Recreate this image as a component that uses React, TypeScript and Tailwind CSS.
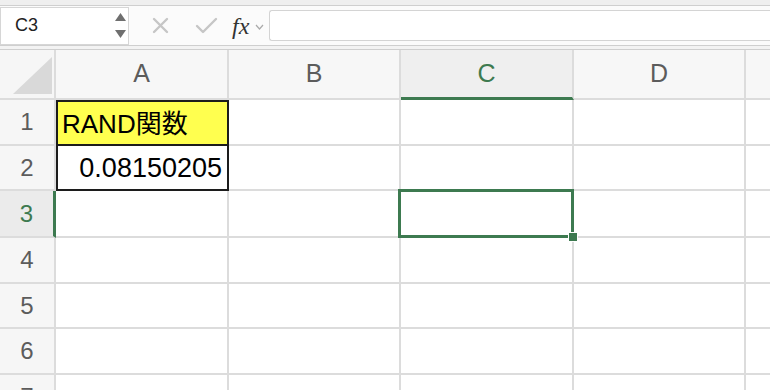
import React from 'react';

const GRID = 'border-[#dcdcdc]';
const colWidths = ['w-[173px]', 'w-[172px]', 'w-[173px]', 'w-[172px]'];
const colNames = ['A', 'B', 'C', 'D'];
const rowHeights = ['h-[46px]', 'h-[45px]', 'h-[47px]', 'h-[46px]', 'h-[45px]', 'h-[46px]', 'h-[46px]'];

const Toolbar = () => (
  <div className="flex h-[40px] items-center border-b border-[#cfcfcf] bg-[#fbfbfb]">
    <div className="flex h-[38px] w-[129px] items-center justify-between border border-[#d6d6d6] bg-white pl-[14px] pr-[2px]">
      <span className="text-[18px] text-[#222]">C3</span>
      <div className="flex flex-col gap-[9px]">
        <svg width="11" height="8" viewBox="0 0 11 8">
          <polygon points="5.5,0 11,8 0,8" fill="#6f6f6f" />
        </svg>
        <svg width="11" height="8" viewBox="0 0 11 8">
          <polygon points="0,0 11,0 5.5,8" fill="#6f6f6f" />
        </svg>
      </div>
    </div>
    <svg className="ml-[23px]" width="17" height="17" viewBox="0 0 17 17">
      <path d="M2 2 L15 15 M15 2 L2 15" stroke="#c6c6c6" strokeWidth="2.4" strokeLinecap="round" />
    </svg>
    <svg className="ml-[26px]" width="23" height="17" viewBox="0 0 23 17">
      <path d="M2 9 L8 15 L21 2" stroke="#c6c6c6" strokeWidth="2.4" fill="none" strokeLinecap="round" strokeLinejoin="round" />
    </svg>
    <span className="ml-[14px] font-['Liberation_Serif',serif] text-[24px] italic leading-none text-[#333]">fx</span>
    <svg className="ml-[6px] mt-[2px]" width="9" height="6" viewBox="0 0 9 6">
      <path d="M1 1 L4.5 5 L8 1" stroke="#aaaaaa" strokeWidth="1.2" fill="none" />
    </svg>
    <div className="ml-[5px] h-[31px] flex-1 rounded-l-[3px] border border-r-0 border-[#d4d4d4] bg-white" />
  </div>
);

const HeaderRow = () => (
  <div className="flex h-[50px]">
    <div className={`flex w-[56px] items-end border-r-2 border-b-2 ${GRID} bg-[#f6f6f6]`}>
      <svg width="54" height="48" viewBox="0 0 54 48">
        <polygon points="13,44 52,44 52,7" fill="#d9d9d9" />
      </svg>
    </div>
    {colNames.map((c, i) => (
      <div
        key={c}
        className={`${colWidths[i]} flex items-center justify-center border-r-2 text-[25px] ${
          c === 'C'
            ? 'border-b-[3px] border-b-[#3d7a50] bg-[#efefef] text-[#3d7a50]'
            : `border-b-2 bg-[#f7f7f7] text-[#5c5c5c]`
        } ${GRID}`}
      >
        {c}
      </div>
    ))}
    <div className={`flex-1 border-b-2 ${GRID} bg-[#f7f7f7]`} />
  </div>
);

const Cell = ({ row, col, width }: { row: number; col: number; width: string }) => {
  if (row === 1 && col === 0) {
    return (
      <div className={`${width} flex items-end border-r-2 border-b-2 border-[#1c1c1c] bg-[#ffff4f] pb-[7px] pl-[6px] text-[26px] leading-none text-black shadow-[inset_2px_2px_0_0_#1c1c1c]`}>
        RAND関数
      </div>
    );
  }
  if (row === 2 && col === 0) {
    return (
      <div className={`${width} flex items-end justify-end border-r-2 border-b-2 border-[#1c1c1c] bg-white pb-[7px] pr-[5px] text-[27px] leading-none text-black shadow-[inset_2px_0_0_0_#1c1c1c]`}>
        0.08150205
      </div>
    );
  }
  if (row === 3 && col === 2) {
    return (
      <div className={`${width} relative border-r-2 border-b-2 ${GRID}`}>
        <div className="absolute -top-[2px] -left-[3px] -right-[2px] -bottom-[2px] border-[3px] border-[#3d7a50]" />
        <div className="absolute -right-[6px] -bottom-[6px] h-[10px] w-[10px] border border-white bg-[#3d7a50]" />
      </div>
    );
  }
  return <div className={`${width} border-r-2 border-b-2 ${GRID}`} />;
};

const Row = ({ n, height }: { n: number; height: string }) => (
  <div className={`flex ${height}`}>
    <div
      className={`flex w-[56px] items-center justify-center border-b-2 text-[24px] ${GRID} ${
        n === 3
          ? 'border-r-[3px] border-r-[#3d7a50] bg-[#ebebeb] text-[#3d7a50]'
          : `border-r-2 bg-[#f6f6f6] text-[#5c5c5c]`
      }`}
    >
      {n}
    </div>
    {colWidths.map((w, i) => (
      <Cell key={i} row={n} col={i} width={w} />
    ))}
    <div className={`flex-1 border-b-2 ${GRID}`} />
  </div>
);

export default function App() {
  return (
    <div className="h-[390px] w-[770px] overflow-hidden bg-white font-['Liberation_Sans','Noto_Sans_CJK_JP',sans-serif]">
      <div className="h-[6px] border-b border-[#cfcfcf] bg-[#efefef]" />
      <Toolbar />
      <div className="h-[4px] border-b border-[#cfcfcf] bg-[#f3f3f3]" />
      <HeaderRow />
      {rowHeights.map((h, i) => (
        <Row key={i} n={i + 1} height={h} />
      ))}
    </div>
  );
}
